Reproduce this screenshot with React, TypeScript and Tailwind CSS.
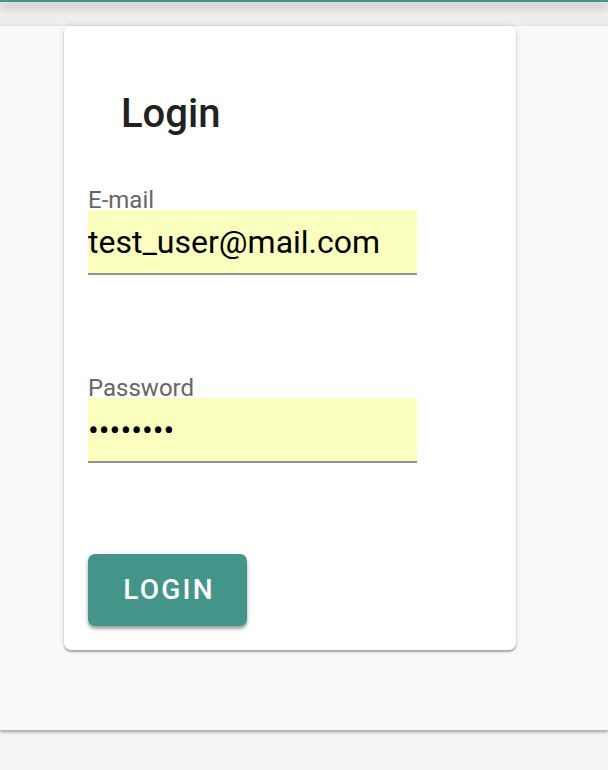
import React from "react";

export default function App() {
  const font = { fontFamily: "Roboto, 'Noto Sans', sans-serif" };
  return (
    <div className="min-h-[770px] w-full bg-[#f4f4f4] overflow-hidden" style={font}>
      <div className="relative z-20 h-[2px] bg-[#43958a] shadow-[0_4px_10px_rgba(0,0,0,0.55)]" />
      <div className="h-[23px] bg-[#eeeeee]" />
      <div className="relative z-10 bg-[#fafafa] border-t border-[#e4e4e4] shadow-[0_2px_3px_rgba(0,0,0,0.35)] pb-[80px] pl-[64px]">
        <div className="w-[452px] h-[624px] bg-white rounded-[7px] shadow-[0_2px_2px_rgba(0,0,0,0.3),0_0_7px_rgba(0,0,0,0.1)] flex flex-col px-[24px]">
          <h1 className="mt-[68px] ml-[33px] text-[40px] leading-[40px] font-medium text-[#212121]">Login</h1>
          <label className="mt-[56px] flex flex-col">
            <span className="text-[24px] leading-[20px] h-[20px] text-[#666666]">E-mail</span>
            <input
              type="email"
              defaultValue="test_user@mail.com"
              className="w-[329px] h-[65px] bg-[#faffbd] border-b-2 border-[#949494] text-[32px] text-black outline-none p-0"
              style={font}
            />
          </label>
          <label className="mt-[103px] flex flex-col">
            <span className="text-[24px] leading-[20px] h-[20px] text-[#666666]">Password</span>
            <input
              type="password"
              defaultValue="password"
              className="w-[329px] h-[65px] bg-[#faffbd] border-b-2 border-[#949494] text-[32px] text-black outline-none p-0"
              style={font}
            />
          </label>
          <button className="mt-[91px] w-[159px] h-[72px] rounded-[7px] bg-[#43958a] text-white text-[28px] font-medium tracking-[2.2px] pl-[3px] shadow-[0_3px_3px_rgba(0,0,0,0.3),0_1px_6px_rgba(0,0,0,0.12)]">
            LOGIN
          </button>
        </div>
      </div>
    </div>
  );
}
